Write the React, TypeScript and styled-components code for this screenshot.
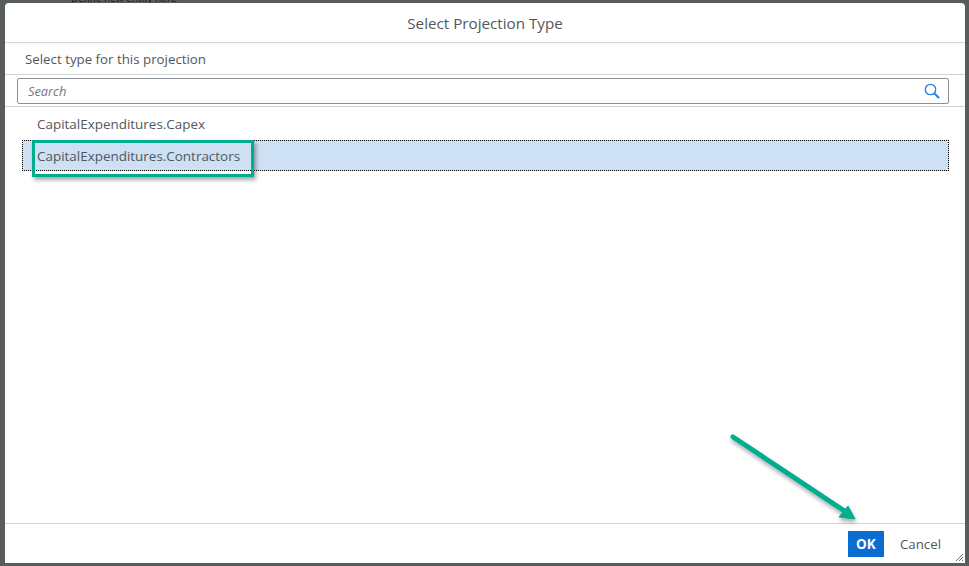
import { createGlobalStyle, styled } from "styled-components";

const GlobalStyle = createGlobalStyle`
  html, body {
    margin: 0;
    padding: 0;
    height: 100%;
    background: #585c5a;
    font-family: "Open Sans", "Liberation Sans", sans-serif;
  }
`;

const Backdrop = styled.div`
  position: relative;
  width: 969px;
  height: 566px;
  overflow: hidden;
  background: #585c5a;
  padding: 3px 4px 3px 5px;
  box-sizing: border-box;
`;

const BehindText = styled.div`
  position: absolute;
  left: 71px;
  top: -9px;
  font-size: 10px;
  color: #1d1d1d;
`;

const Dialog = styled.div`
  position: relative;
  display: flex;
  flex-direction: column;
  height: 100%;
  background: #fff;
  border-radius: 4px 4px 0 0;
  color: #32363a;
`;

const Header = styled.header`
  flex: 0 0 40px;
  box-sizing: border-box;
  display: flex;
  align-items: center;
  justify-content: center;
  font-size: 15.2px;
  color: #53575b;
  border-bottom: 1px solid #d9d9d9;
  box-shadow: 0 1px 2px rgba(0, 0, 0, 0.05);
`;

const SubHeader = styled.div`
  flex: 0 0 32px;
  box-sizing: border-box;
  display: flex;
  align-items: center;
  padding-left: 20px;
  font-size: 13.3px;
  color: #53575b;
  border-bottom: 1px solid #d4d4d4;
`;

const SearchRow = styled.div`
  flex: 0 0 32px;
  box-sizing: border-box;
  padding: 3px 16px 2px 12px;
  border-bottom: 1px solid #d4d4d4;
`;

const SearchBox = styled.div`
  display: flex;
  align-items: center;
  justify-content: space-between;
  box-sizing: border-box;
  height: 26px;
  padding: 0 8px 0 10px;
  border: 1px solid #89919a;
  border-radius: 2px;
  font-size: 12.8px;
  font-style: italic;
  color: #74777a;
`;

const List = styled.div`
  flex: 1;
  display: flex;
  flex-direction: column;
  padding: 0 16px 0 17px;
`;

const Item = styled.div<{ $selected?: boolean }>`
  box-sizing: border-box;
  height: ${(p) => (p.$selected ? "31px" : "33px")};
  display: flex;
  align-items: center;
  padding-left: 15px;
  font-size: 13.45px;
  color: #53575b;
  background: ${(p) => (p.$selected ? "#cde0f4" : "transparent")};
  outline: ${(p) => (p.$selected ? "1px dotted #000" : "none")};
  outline-offset: -1px;
`;

const Footer = styled.footer`
  flex: 0 0 40px;
  box-sizing: border-box;
  display: flex;
  align-items: center;
  justify-content: flex-end;
  gap: 16px;
  padding: 0 24px 0 0;
  border-top: 1px solid #d4d4d4;
`;

const OkButton = styled.button`
  width: 36px;
  height: 26px;
  border: none;
  padding: 0;
  background: #0a6ed1;
  color: #fff;
  font: 700 13.5px "Open Sans", sans-serif;
`;

const CancelButton = styled.button`
  border: none;
  padding: 0;
  background: none;
  color: #53575b;
  font: 400 13.3px "Open Sans", sans-serif;
`;

const Highlight = styled.div`
  position: absolute;
  left: 32px;
  top: 140px;
  width: 222px;
  height: 37px;
  box-sizing: border-box;
  border: 3px solid #00ad8e;
  box-shadow: 2px 3px 4px rgba(0, 0, 0, 0.35);
`;

const Overlay = styled.svg`
  position: absolute;
  left: 720px;
  top: 420px;
  pointer-events: none;
`;

const Grip = styled.svg`
  position: absolute;
  right: 1px;
  bottom: 1px;
`;

export default function App() {
  return (
    <Backdrop>
      <GlobalStyle />
      <BehindText>Define new entity here</BehindText>
      <Dialog>
        <Header>Select Projection Type</Header>
        <SubHeader>Select type for this projection</SubHeader>
        <SearchRow>
          <SearchBox>
            Search
            <svg width="16" height="16" viewBox="0 0 16 16" fill="none" stroke="#1f7fdc">
              <circle cx="6.5" cy="6.5" r="5.2" strokeWidth="1.3" />
              <path d="M10.4 10.4 L15 15" strokeWidth="2" />
            </svg>
          </SearchBox>
        </SearchRow>
        <List>
          <Item>CapitalExpenditures.Capex</Item>
          <Item $selected>CapitalExpenditures.Contractors</Item>
        </List>
        <Footer>
          <OkButton>OK</OkButton>
          <CancelButton>Cancel</CancelButton>
        </Footer>
        <Grip width="10" height="10" viewBox="0 0 10 10" stroke="#6f6f6f">
          <path d="M9 2 L2 9 M9 5 L5 9 M9 8 L8 9" />
        </Grip>
      </Dialog>
      <Highlight />
      <Overlay width="160" height="110" viewBox="0 0 160 110">
        <defs>
          <filter id="shadow" x="-20%" y="-20%" width="150%" height="150%">
            <feDropShadow dx="1" dy="3" stdDeviation="2" floodColor="#000" floodOpacity="0.35" />
          </filter>
        </defs>
        <g filter="url(#shadow)">
          <path d="M13 17 L126 92" stroke="#00ad8e" strokeWidth="5" strokeLinecap="round" fill="none" />
          <path d="M135 99 L119 97 L128 86 Z" fill="#00ad8e" stroke="#00ad8e" strokeLinejoin="round" />
        </g>
      </Overlay>
    </Backdrop>
  );
}
